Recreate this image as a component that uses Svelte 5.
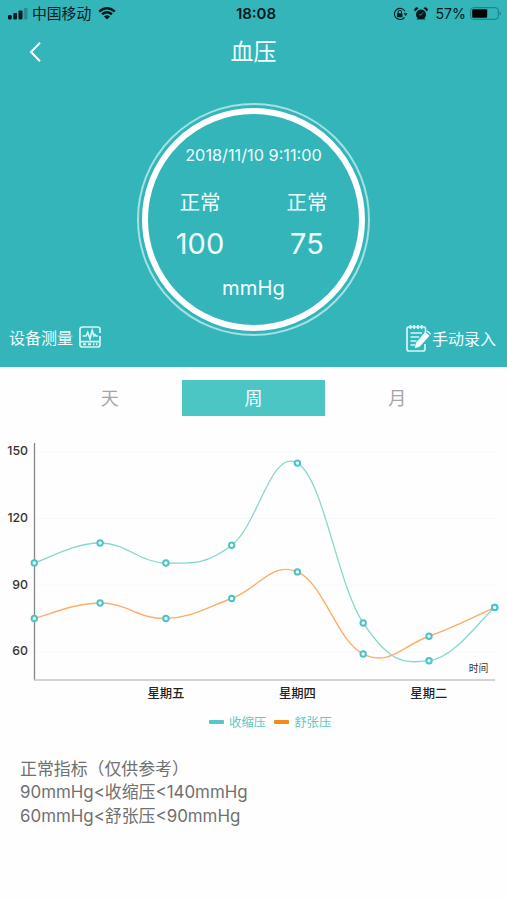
<script>
  const xs = [34.3, 100.1, 165.9, 231.7, 297.4, 363.2, 429, 494.7];
  const yOf = (v) => 785 - v * 2.22;
  const systolic = [100, 109, 100, 108, 145, 73, 56, 80];
  const diastolic = [75, 82, 75, 84, 96, 59, 67, 80];
  const toPoints = (values) => values.map((v, i) => [xs[i], yOf(v)]);

  // Cubic smoothing: each tangent follows the neighbouring points.
  function curve(points, k = 0.2) {
    const at = (i) => points[Math.max(0, Math.min(points.length - 1, i))];
    let d = `M${points[0]}`;
    for (let i = 1; i < points.length; i++) {
      const a = at(i - 2), b = at(i - 1), c = at(i), e = at(i + 1);
      d += `C${b[0] + (c[0] - a[0]) * k},${b[1] + (c[1] - a[1]) * k} ${c[0] - (e[0] - b[0]) * k},${c[1] - (e[1] - b[1]) * k} ${c}`;
    }
    return d;
  }

  const high = toPoints(systolic);
  const low = toPoints(diastolic);
  const dots = [...low, ...high];
  const ticks = [150, 120, 90, 60];
  const days = [['星期五', 165.9], ['星期四', 297.4], ['星期二', 428.8]];
  const tabs = ['天', '周', '月'];
</script>

<div class="screen">
  <header>
    <div class="status">
      <div class="left">
        <svg width="20" height="12" viewBox="0 0 20 12">
          <rect x="0" y="7" width="3.7" height="4.5" rx="1" />
          <rect x="5.3" y="5" width="3.7" height="6.5" rx="1" />
          <rect x="10.5" y="2.5" width="4" height="9" rx="1" />
          <rect x="15.8" y="0" width="3.7" height="11.5" rx="1" opacity=".25" />
        </svg>
        <span class="carrier">中国移动</span>
        <svg class="wifi" width="18" height="13" viewBox="0 0 18 13">
          <path d="M1.2 4.6Q9-2.1 16.8 4.6M4.1 7.3Q9 3.2 13.9 7.3" fill="none" stroke="#06191a" stroke-width="2.5" />
          <path d="M5.9 9.4Q9 6.9 12.1 9.4L9 12.5Z" />
        </svg>
      </div>
      <b>18:08</b>
      <div class="right">
        <svg width="15" height="14" viewBox="0 0 15 14">
          <path d="M11.9 4.2A5.6 5.6 0 1 0 11.5 10.3" fill="none" stroke="#06191a" stroke-width="1.1" />
          <path d="M10.6 6.2h4l-2 2.7z" />
          <rect x="4.1" y="6.2" width="5.4" height="4.1" rx=".6" />
          <path d="M5.1 6.5V5a1.7 1.7 0 0 1 3.4 0v1.5" fill="none" stroke="#06191a" stroke-width="1" />
        </svg>
        <svg class="alarm" width="14" height="14" viewBox="0 0 14 14">
          <circle cx="7" cy="7.6" r="5" />
          <path d="M1 4.5A2.4 2.4 0 0 1 4.5 1.2ZM13 4.5A2.4 2.4 0 0 0 9.5 1.2ZM2.5 13l1.8-2 1.2 1zM11.5 13l-1.8-2-1.2 1z" />
          <path d="M9.2 5.4L7 7.8H5.2" fill="none" stroke="#33b5ba" stroke-width=".8" />
        </svg>
        <span class="percent">57%</span>
        <svg width="33" height="13" viewBox="0 0 33 13">
          <rect x=".7" y=".7" width="27.6" height="11.6" rx="2.8" fill="none" stroke="#187b80" stroke-width="1" />
          <rect x="2.2" y="2.2" width="15" height="8.6" rx="1" fill="#000" />
          <path d="M29.7 4.5Q32 6.5 29.7 8.5Z" fill="#187b80" />
        </svg>
      </div>
    </div>

    <nav>
      <svg width="14" height="22" viewBox="0 0 14 22"><path d="M12 1.8L3 11l9 9.2" fill="none" stroke="#fff" stroke-width="2" /></svg>
      <h1>血压</h1>
    </nav>

    <div class="dial">
      <div class="ring">
        <time>2018/11/10 9:11:00</time>
        <div class="readings">
          <div><span>正常</span><strong>100</strong></div>
          <div><span>正常</span><strong>75</strong></div>
        </div>
        <div class="unit">mmHg</div>
      </div>
    </div>

    <div class="actions">
      <div class="action measure">
        <span>设备测量</span>
        <svg class="device" width="24" height="24" viewBox="0 0 24 24" fill="none" stroke="#d5f7f7" stroke-width="1.7">
          <path d="M22 8V4.5Q22 2 19.5 2H4.5Q2 2 2 4.5V19.5Q2 22 4.5 22H19.5Q22 22 22 19.5V11M2 16.7H22" />
          <path d="M4.5 11H8L9.7 7.5L12 13.7L14.2 5.5L16 11L17 9.6L18 11H20" />
          <path d="M5 19.3h3M10 19.3h3M15 19.3h1.5M18 19.3h1.5" stroke-width="2" />
        </svg>
      </div>
      <div class="action">
        <svg class="note" width="26" height="28" viewBox="0 0 26 28" fill="none" stroke="#d5f7f7" stroke-width="1.7">
          <path d="M19 20V25Q19 27 17 27H3Q1 27 1 25V4.5Q1 3 2.5 3H18Q19.5 3 19.5 4.5V8" />
          <path d="M4.5 1v4M8.2 1v4M11.9 1v4M15.6 1v4" />
          <path d="M4.5 9H16M4.5 13H13M4.5 17H10.5M4.5 21H9" />
          <path d="M19.2 7.8l4.4 4-10 10.9-4.8 1.5 1-5.2z" fill="#f2ffff" stroke="none" />
          <path d="M20.2 6.9q1-1 2 0l2.2 2.1q.9.9 0 1.8z" fill="#f2ffff" stroke="none" />
        </svg>
        <span>手动录入</span>
      </div>
    </div>
  </header>

  <div class="tabs">
    {#each tabs as tab, i}
      <div class="tab" class:active={i === 1}>{tab}</div>
    {/each}
  </div>

  <svg class="chart" width="507" height="276" viewBox="0 430 507 276">
    {#each ticks as t}
      <line x1="35" x2="495" y1={yOf(t)} y2={yOf(t)} stroke="#f8f8f8" />
      <text class="tick" x="28" y={yOf(t) + 3.4} text-anchor="end">{t}</text>
    {/each}
    <line x1="34.5" x2="34.5" y1="443" y2="680" stroke="#858585" stroke-width="1.3" />
    <line x1="34" x2="495" y1="680" y2="680" stroke="#c4c4c4" stroke-width="1.3" />
    <path d={curve(high)} fill="none" stroke="#86d8cf" stroke-width="1.3" />
    <path d={curve(low)} fill="none" stroke="#fbae69" stroke-width="1.4" />
    {#each dots as [x, y]}
      <circle cx={x} cy={y} r="2.7" fill="#fff" stroke="#4ac3c5" stroke-width="2" />
    {/each}
    {#each days as [day, x]}
      <text class="day" {x} y="698" text-anchor="middle">{day}</text>
    {/each}
    <text class="time" x="478.5" y="672.4" text-anchor="middle">时间</text>
  </svg>

  <div class="legend">
    <i></i><span>收缩压</span><i class="orange"></i><span>舒张压</span>
  </div>

  <div class="notes">
    <p>正常指标（仅供参考）</p>
    <p>90mmHg&lt;收缩压&lt;140mmHg</p>
    <p>60mmHg&lt;舒张压&lt;90mmHg</p>
  </div>
</div>

<style>
  .screen {
    width: 507px;
    height: 900px;
    overflow: hidden;
    background: #fefefe;
    font-family: Inter, "Noto Sans CJK SC", sans-serif;
  }
  svg { display: block; flex: none; }
  header { height: 367px; background: #33b5ba; color: #f0ffff; }
  .status {
    height: 27px;
    display: grid;
    grid-template-columns: 1fr auto 1fr;
    align-items: center;
    color: #06191a;
    fill: #06191a;
    padding: 0 4px 0 8px;
  }
  .left, .right { display: flex; align-items: center; }
  .right { justify-content: flex-end; }
  .status b { font-size: 15px; font-weight: 600; margin-left: 1px; }
  .carrier { font-size: 14.8px; line-height: 25px; padding-top: 2px; margin-left: 4px; }
  .wifi { margin-left: 7px; }
  .alarm { margin-left: 6px; }
  .percent { font-size: 14.2px; margin: 0 4px 0 7px; }
  nav {
    height: 49px;
    display: grid;
    grid-template-columns: 1fr auto 1fr;
    align-items: center;
    padding: 0 28px 0 28px;
  }
  h1 { margin: 0; font-size: 23px; font-weight: 400; line-height: 47px; padding-top: 2px; }
  .dial {
    box-sizing: border-box;
    width: 233px;
    height: 233px;
    margin: 27px auto 0 137px;
    border: 2px solid #a3e1e2;
    border-radius: 50%;
    padding: 3px;
  }
  .ring {
    box-sizing: border-box;
    width: 223px;
    height: 223px;
    border: 6px solid #fff;
    border-radius: 50%;
    display: flex;
    flex-direction: column;
    align-items: center;
    padding-top: 31px;
  }
  time { font-size: 16.3px; line-height: 20px; }
  .readings { display: flex; width: 214px; margin-top: 24px; }
  .readings div { width: 107px; display: flex; flex-direction: column; align-items: center; }
  .readings span { font-size: 20.5px; line-height: 28px; }
  .readings strong { font-weight: 400; font-size: 29px; line-height: 36px; margin-top: 9px; }
  .unit { font-size: 20.2px; line-height: 26px; margin-top: 13px; }
  .actions {
    display: flex;
    justify-content: space-between;
    margin-top: -13px;
    padding: 0 11px 0 9px;
  }
  .action { display: flex; align-items: center; height: 30px; font-size: 16px; }
  .measure { height: 27px; }
  .device { margin-left: 5px; }
  .tabs { display: flex; width: 431px; height: 36px; margin: 13px 0 14px 38px; }
  .tab {
    flex: 1;
    text-align: center;
    font-size: 18px;
    line-height: 38px;
    height: 36px;
    color: #a5a5a5;
  }
  .active { background: #4cc6c5; color: #f4ffff; }
  .tick { font-size: 12.3px; fill: #333; font-weight: 500; }
  .day { font-size: 12.3px; fill: #222; font-weight: 500; }
  .time { font-size: 9.8px; fill: #333; }
  .legend {
    display: flex;
    align-items: center;
    height: 20px;
    margin: 6px 0 0 209px;
    font-size: 12.4px;
    color: #5fc8c3;
  }
  .legend span { line-height: 20px; padding-top: 2px; }
  .legend i { width: 15px; height: 4px; border-radius: 1px; background: #55c7c8; margin-right: 5px; }
  .legend .orange { background: #f58a1b; margin-left: 8px; }
  .notes { margin: 26px 0 0 20px; color: #707070; font-size: 16.9px; }
  p { margin: 0; line-height: 23.4px; white-space: nowrap; }
</style>
